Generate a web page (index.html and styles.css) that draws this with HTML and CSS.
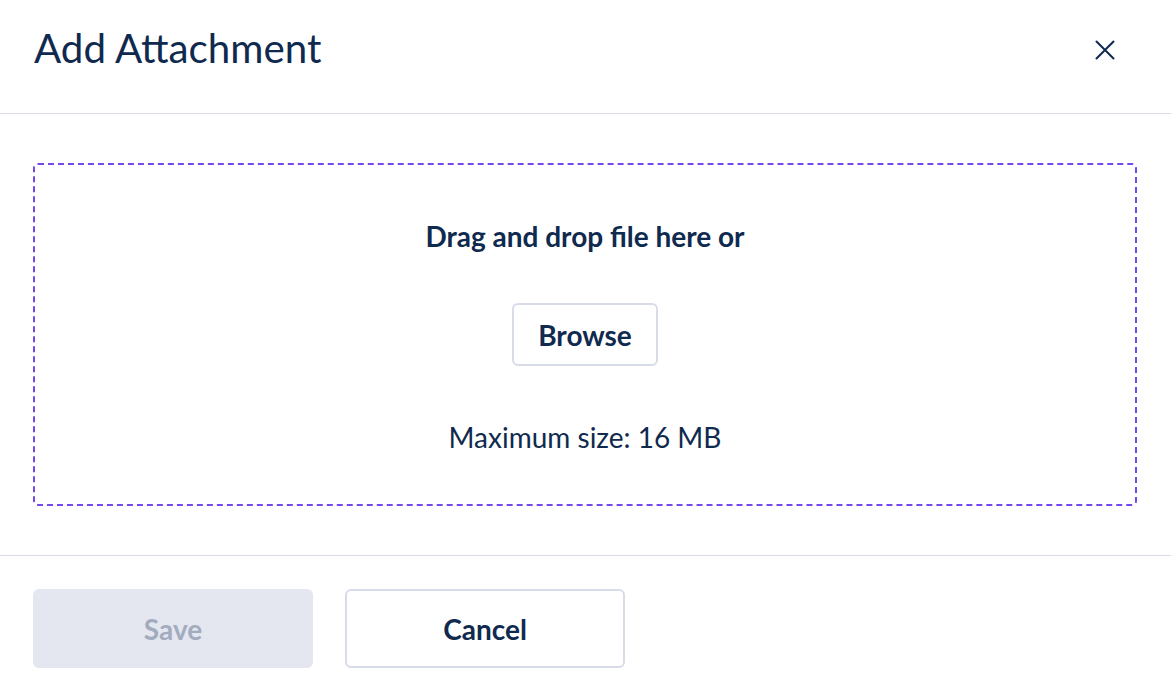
FILE: index.html
```html
<!DOCTYPE html>
<html lang="en">
<head>
<meta charset="utf-8">
<title>Add Attachment</title>
<link rel="stylesheet" href="styles.css">
</head>
<body>
<div class="modal">
  <header class="modal-header">
    <h1 class="modal-title">Add Attachment</h1>
    <button class="close-btn" aria-label="Close">
      <svg width="20" height="20" viewBox="0 0 20 20" fill="none" stroke="#0f2a4e" stroke-width="2" stroke-linecap="round">
        <path d="M1.5 1.5 L18.5 18.5 M18.5 1.5 L1.5 18.5"/>
      </svg>
    </button>
  </header>
  <section class="modal-body">
    <div class="dropzone">
      <p class="drop-text">Drag and drop file here or</p>
      <button class="browse-btn">Browse</button>
      <p class="max-size">Maximum size: 16 MB</p>
    </div>
  </section>
  <footer class="modal-footer">
    <button class="btn btn-save" disabled>Save</button>
    <button class="btn btn-cancel">Cancel</button>
  </footer>
</div>
</body>
</html>
```
FILE: styles.css
```css
* { box-sizing: border-box; }
html, body { margin: 0; padding: 0; background: #ffffff; }
body {
  font-family: Lato, "Open Sans", sans-serif;
  color: #0f2a4e;
}
.modal { width: 1171px; }
.modal-header {
  height: 114px;
  display: flex;
  align-items: center;
  justify-content: space-between;
  padding: 0 56px 0 34px;
  border-bottom: 1.5px solid #d8dce8;
}
.modal-title {
  margin: 0;
  font-size: 40.3px;
  font-weight: 400;
  line-height: 1;
  margin-top: -16px;
}
.close-btn {
  background: none;
  border: 0;
  padding: 0;
  width: 20px;
  height: 20px;
  margin-top: -14px;
  cursor: pointer;
}
.close-btn svg { display: block; }
.modal-body {
  padding: 49px 34px 49px 33px;
  border-bottom: 1.5px solid #d8dce8;
}
.dropzone {
  height: 343px;
  border: 2px dashed #7448ec;
  border-radius: 5px;
  display: flex;
  flex-direction: column;
  align-items: center;
  padding-top: 54px;
}
.drop-text {
  margin: 0;
  font-size: 28px;
  font-weight: 700;
  line-height: 34px;
}
.browse-btn {
  margin-top: 50px;
  width: 146px;
  height: 63px;
  background: #fff;
  border: 2px solid #d8dce8;
  border-radius: 6px;
  font-family: inherit;
  font-size: 28px;
  font-weight: 700;
  color: #0f2a4e;
}
.max-size {
  margin: 54px 0 0;
  font-size: 28px;
  font-weight: 400;
  line-height: 34px;
}
.modal-footer {
  display: flex;
  gap: 32px;
  padding: 33px 33px;
}
.btn {
  width: 280px;
  height: 79px;
  border-radius: 6px;
  font-family: inherit;
  font-size: 28px;
  font-weight: 700;
}
.btn-save {
  background: #e4e7f0;
  border: 0;
  color: #a3acbf;
}
.btn-cancel {
  background: #fff;
  border: 2px solid #d8dce8;
  color: #0f2a4e;
}
```
